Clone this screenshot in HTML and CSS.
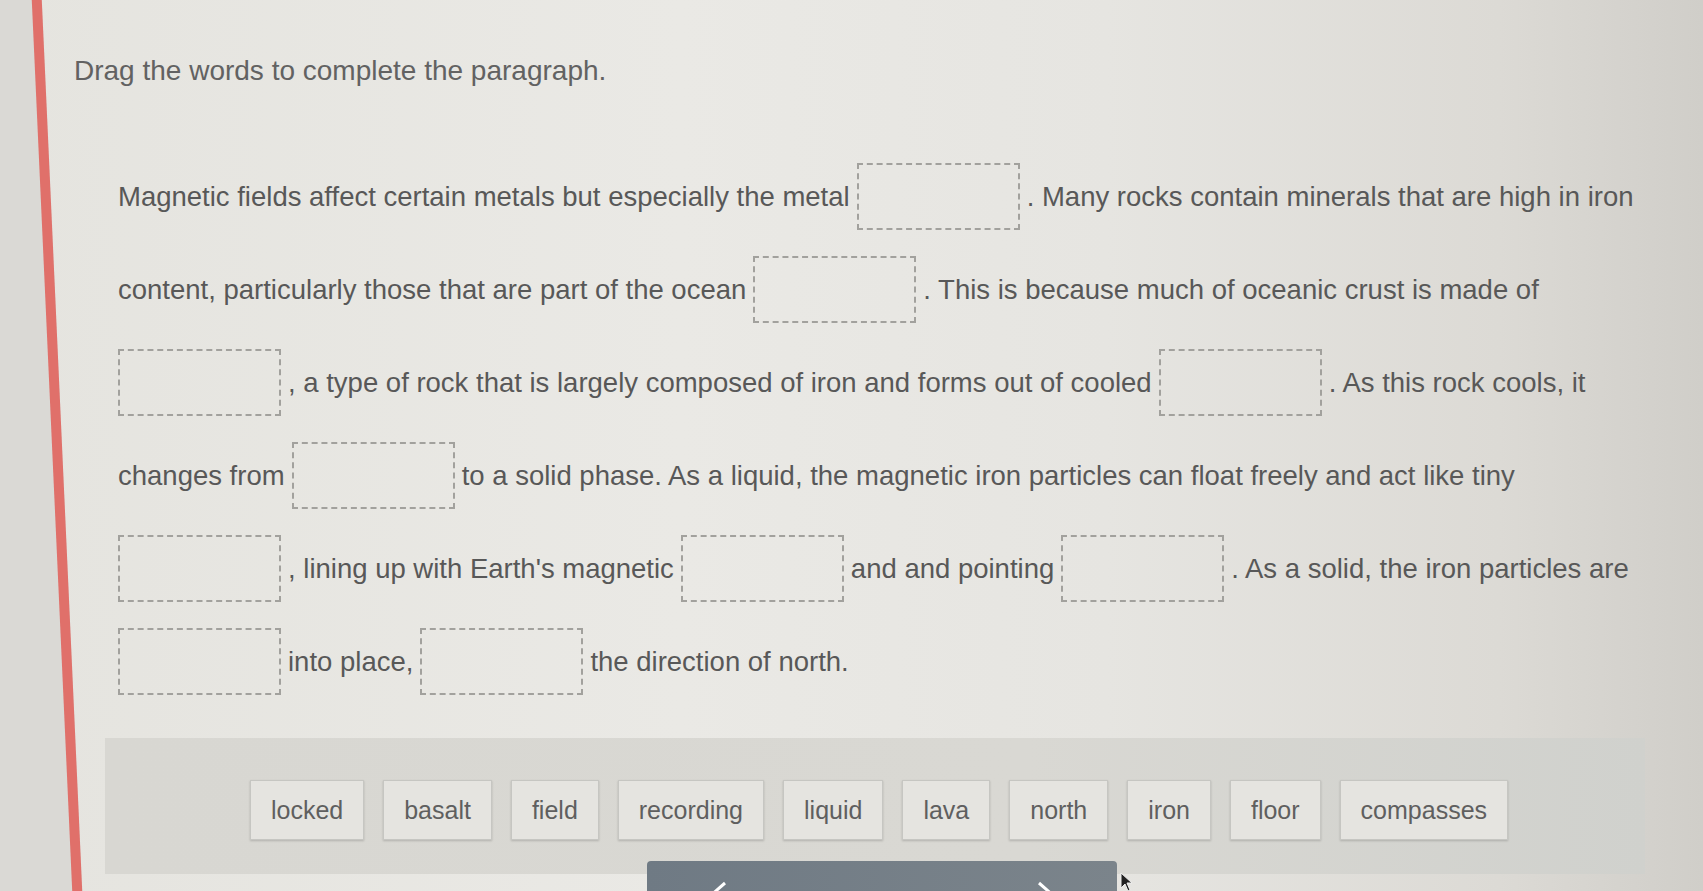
FILE: index.html
```html
<!DOCTYPE html>
<html lang="en">
<head>
<meta charset="utf-8">
<title>Drag the words</title>
<link rel="stylesheet" href="styles.css">
</head>
<body>
<div class="page">
  <div class="gutter"></div>
  <main class="content">
    <h1 class="title">Drag the words to complete the paragraph.</h1>
    <div class="para">
      <div class="line"><span>Magnetic fields affect certain metals but especially the metal</span><span class="blank"></span><span>. Many rocks contain minerals that are high in iron</span></div>
      <div class="line"><span>content, particularly those that are part of the ocean</span><span class="blank"></span><span>. This is because much of oceanic crust is made of</span></div>
      <div class="line"><span class="blank first"></span><span>, a type of rock that is largely composed of iron and forms out of cooled</span><span class="blank"></span><span>. As this rock cools, it</span></div>
      <div class="line"><span>changes from</span><span class="blank"></span><span>to a solid phase. As a liquid, the magnetic iron particles can float freely and act like tiny</span></div>
      <div class="line"><span class="blank first"></span><span>, lining up with Earth's magnetic</span><span class="blank"></span><span>and and pointing</span><span class="blank"></span><span>. As a solid, the iron particles are</span></div>
      <div class="line"><span class="blank first"></span><span>into place,</span><span class="blank"></span><span>the direction of north.</span></div>
    </div>
    <section class="bank">
      <div class="tiles">
        <div class="tile">locked</div>
        <div class="tile">basalt</div>
        <div class="tile">field</div>
        <div class="tile">recording</div>
        <div class="tile">liquid</div>
        <div class="tile">lava</div>
        <div class="tile">north</div>
        <div class="tile">iron</div>
        <div class="tile">floor</div>
        <div class="tile">compasses</div>
      </div>
      <div class="navbar">
        <svg class="chev" width="40" height="40" viewBox="0 0 40 40"><path d="M28 6 L12 20 L28 34" fill="none" stroke="#ffffff" stroke-width="3"/></svg>
        <svg class="chev" width="40" height="40" viewBox="0 0 40 40"><path d="M12 6 L28 20 L12 34" fill="none" stroke="#ffffff" stroke-width="3"/></svg>
      </div>
    </section>
  </main>
  <svg class="cursor" width="14" height="20" viewBox="0 0 14 20"><path d="M1 1 L1 16 L5 12 L8 19 L10 18 L7 11 L12 11 Z" fill="#222" stroke="#eee" stroke-width="1"/></svg>
</div>
</body>
</html>
```

FILE: styles.css
```css
html, body {
  margin: 0;
  padding: 0;
  height: 100%;
}
body {
  font-family: "Liberation Sans", Arial, sans-serif;
  color: #585858;
  background: #e6e5e0;
}
.page {
  position: relative;
  display: flex;
  height: 891px;
  overflow: hidden;
  background: linear-gradient(to right, #e5e4df 0%, #eae9e5 40%, #e6e5e1 65%, #dcdad5 88%, #d0cec9 100%);
}
.gutter {
  flex: 0 0 auto;
  width: 82px;
  margin-left: -30px;
  background: #dad9d5;
  border-right: 10px solid #e0706a;
  transform: skewX(2.6deg);
}
.content {
  flex: 1;
  display: flex;
  flex-direction: column;
}
.title {
  margin: 54px 0 0 12px;
  font-size: 28px;
  line-height: 34px;
  font-weight: normal;
  color: #626262;
}
.para {
  margin: 75px 0 0 56px;
  display: flex;
  flex-direction: column;
  gap: 26px;
  font-size: 27.5px;
}
.line {
  display: flex;
  align-items: center;
  height: 67px;
  white-space: pre;
}
.blank {
  display: inline-block;
  width: 159px;
  height: 63px;
  margin: 0 7px;
  border: 2px dashed #a2a19d;
  flex: 0 0 auto;
}
.blank.first {
  margin-left: 0;
}
.bank {
  margin: 43px 0 0 43px;
  width: 1540px;
  height: 136px;
  background: linear-gradient(to right, #d8d7d2 0%, #d9d8d3 60%, #d0d1cd 100%);
  display: flex;
  flex-direction: column;
  align-items: center;
}
.tiles {
  margin-top: 42px;
  display: flex;
  gap: 19px;
  margin-left: 8px;
}
.tile {
  height: 58px;
  padding: 0 20px;
  display: flex;
  align-items: center;
  background: #e5e4e0;
  border: 1px solid #c6c6c2;
  box-shadow: 0 1px 2px rgba(0, 0, 0, 0.18);
  font-size: 25px;
  color: #5f5f5f;
}
.navbar {
  margin: 21px 0 0 14px;
  width: 470px;
  height: 50px;
  flex: 0 0 auto;
  border-radius: 4px 4px 0 0;
  background: linear-gradient(to right, #6f7a84, #7b848b);
  display: flex;
  justify-content: space-between;
  padding: 0 50px;
  box-sizing: border-box;
}
.chev {
  margin-top: 16px;
}
.cursor {
  position: absolute;
  left: 1120px;
  top: 872px;
}
```
